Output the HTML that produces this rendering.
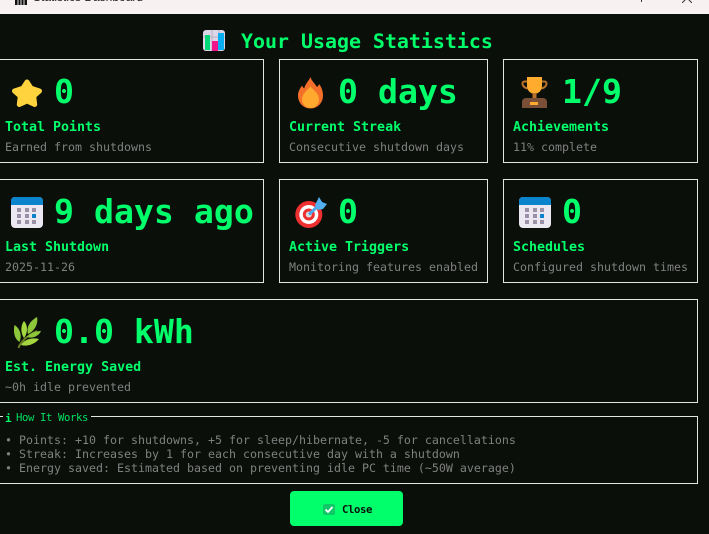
<!DOCTYPE html>
<html lang="en">
<head>
<meta charset="utf-8">
<title>Statistics Dashboard</title>
<style>
html,body{margin:0;padding:0;width:709px;height:534px;overflow:hidden;background:#0a0f0a}
body{position:relative;font-family:"DejaVu Sans Mono","Liberation Mono",monospace}
.t{position:absolute;white-space:pre;line-height:1em}
.card{position:absolute;box-sizing:border-box;border:1px solid #e4e4e4}
.v{color:#00ff6a;font-size:33.2px;font-weight:700}
.l{color:#00ff6a;font-size:13.3px;font-weight:700}
.s{color:#808080;font-size:11.63px}
svg{position:absolute;display:block}
#bar{position:absolute;left:0;top:0;width:709px;height:14px;background:#f8f1f1;overflow:hidden}
</style>
</head>
<body>
<div id="bar">
<svg style="left:15px;top:-6px" width="12" height="11" viewBox="0 0 12 11"><path d="M0 0h12v11H0z" fill="#111"/><path d="M3 2v9M6 2v9M9 2v9" stroke="#ddd" stroke-width="1"/></svg>
<div style="position:absolute;left:33px;top:-10px;font:12px/14px 'Liberation Sans',sans-serif;color:#222">Statistics Dashboard</div>
<div style="position:absolute;left:641px;top:0;width:1px;height:2px;background:#333"></div>
<svg style="left:682px;top:-7px" width="10" height="10" viewBox="0 0 10 10"><path d="M0 0l10 10M10 0L0 10" stroke="#333" stroke-width="1" fill="none"/></svg>
</div>

<svg style="left:203px;top:30px" width="22" height="21" viewBox="0 0 22 21"><rect width="22" height="21" rx="3" fill="#dcd6e6"/><path d="M0 7h22M9 0v21M16 0v21" stroke="#b6b0c0" stroke-width="1"/><rect x="2" y="5" width="5" height="15" fill="#00d878"/><rect x="9" y="11" width="6" height="10" fill="#f0148c"/><rect x="15" y="3" width="6" height="17" fill="#08aef2"/></svg>
<div class="t" style="left:241px;top:32px;color:#00ff6a;font-size:19.93px;font-weight:700">Your Usage Statistics</div>

<div class="card" style="left:-12px;top:59px;width:276px;height:104px"></div>
<svg style="left:11px;top:78px" width="32" height="30" viewBox="0 0 32 30"><path d="M16 4L20.100 10.300 28.500 13 22.700 18.200 23.700 26.500 16 23 8.300 26.500 9.300 18.200 3.500 13 11.900 10.300z" fill="#ffd33d" stroke="#ffd33d" stroke-width="5" stroke-linejoin="round"/></svg>
<div class="t v" style="left:54px;top:75px">0</div>
<div class="t l" style="left:5px;top:121px">Total Points</div>
<div class="t s" style="left:5px;top:142px">Earned from shutdowns</div>

<div class="card" style="left:279px;top:59px;width:209px;height:104px"></div>
<svg style="left:298px;top:77px" width="25" height="32" viewBox="0 0 25 32"><path d="M12.500 0c.8 3.500 4 6 6.500 10 1-.8 1.800-1.800 2-3 2.500 3 4 7 4 11.500C25 26 19.500 31.500 12.500 31.500S0 26 0 18.500C0 14 2.500 11 4 8.500c.6 1.400 1.200 2.300 2.300 3C7 7 10.500 4.500 12.500 0z" fill="#f4702a"/><path d="M12.500 9.500c3 3.500 8.500 7 8.500 13 0 5-3.800 8.500-8.500 8.500S4 27.500 4 22.500c0-6 5.500-9.500 8.500-13z" fill="#ffa92e"/></svg>
<div class="t v" style="left:338px;top:75px">0 days</div>
<div class="t l" style="left:289px;top:121px">Current Streak</div>
<div class="t s" style="left:289px;top:142px">Consecutive shutdown days</div>

<div class="card" style="left:503px;top:59px;width:195px;height:104px"></div>
<svg style="left:521px;top:77px" width="28" height="31" viewBox="0 0 28 31"><path d="M6 4.500H3.500a2 2 0 0 0-2 2.500C2 9.500 4 11 7 11.500M21 4.500h2.500a2 2 0 0 1 2 2.500C25 9.500 23 11 20 11.500" fill="none" stroke="#b8722c" stroke-width="2"/><path d="M6 0h15v9c0 4-3 7-5.500 7.500v1.500h-4v-1.500C9 16 6 13 6 9z" fill="#ffac2e"/><path d="M11.500 16h4v5h-4z" fill="#b8722c"/><path d="M1 31v-6c0-2.500 2-4 4-4h17c2 0 4 1.500 4 4v6z" fill="#7a4f38"/><rect x="9" y="25" width="8" height="3" fill="#ffac2e"/></svg>
<div class="t v" style="left:562px;top:75px">1/9</div>
<div class="t l" style="left:513px;top:121px">Achievements</div>
<div class="t s" style="left:513px;top:142px">11% complete</div>

<div class="card" style="left:-12px;top:179px;width:276px;height:104px"></div>
<svg style="left:11px;top:197px" width="32" height="31" viewBox="0 0 32 31"><rect width="32" height="31" rx="4" fill="#ebe8f2"/><path d="M0 8V4a4 4 0 0 1 4-4h24a4 4 0 0 1 4 4v4z" fill="#0a84cc"/><path d="M6 11h4v4H6zM14 11h4v4h-4zM21 11h4v4h-4zM6 17h4v4H6zM14 17h4v4h-4zM6 23h4v4H6zM14 23h4v4h-4zM21 23h4v4h-4z" fill="#9a91a8"/><path d="M21 17h4v4h-4z" fill="#0a84cc"/></svg>
<div class="t v" style="left:54px;top:195px">9 days ago</div>
<div class="t l" style="left:5px;top:241px">Last Shutdown</div>
<div class="t s" style="left:5px;top:262px">2025-11-26</div>

<div class="card" style="left:279px;top:179px;width:209px;height:104px"></div>
<svg style="left:295px;top:197px" width="32" height="31" viewBox="0 0 32 31"><circle cx="13.800" cy="17.500" r="13.500" fill="#ee3030"/><circle cx="13.800" cy="17.500" r="9.500" fill="#fff"/><circle cx="13.800" cy="17.500" r="6" fill="#ee3030"/><circle cx="13.800" cy="17.500" r="3" fill="#ddd"/><path d="M14 17.500L25 7" stroke="#4aa8ee" stroke-width="3"/><path d="M20 8L24 0l3 5 5 2-4 5-5 1z" fill="#52b0f2"/></svg>
<div class="t v" style="left:338px;top:195px">0</div>
<div class="t l" style="left:289px;top:241px">Active Triggers</div>
<div class="t s" style="left:289px;top:262px">Monitoring features enabled</div>

<div class="card" style="left:503px;top:179px;width:195px;height:104px"></div>
<svg style="left:519px;top:197px" width="32" height="31" viewBox="0 0 32 31"><rect width="32" height="31" rx="4" fill="#ebe8f2"/><path d="M0 8V4a4 4 0 0 1 4-4h24a4 4 0 0 1 4 4v4z" fill="#0a84cc"/><path d="M6 11h4v4H6zM14 11h4v4h-4zM21 11h4v4h-4zM6 17h4v4H6zM14 17h4v4h-4zM6 23h4v4H6zM14 23h4v4h-4zM21 23h4v4h-4z" fill="#9a91a8"/><path d="M21 17h4v4h-4z" fill="#0a84cc"/></svg>
<div class="t v" style="left:562px;top:195px">0</div>
<div class="t l" style="left:513px;top:241px">Schedules</div>
<div class="t s" style="left:513px;top:262px">Configured shutdown times</div>

<div class="card" style="left:-12px;top:299px;width:710px;height:104px"></div>
<svg style="left:14px;top:317px" width="27" height="32" viewBox="0 0 27 32"><path d="M4.500 31C6 26 12 19 23 14" fill="none" stroke="#6b7f24" stroke-width="2"/><path d="M5.500 25C.5 22-1 15 .5 8c5 3 8 10 5 17z" fill="#8ec63a"/><path d="M10 21C6 15 7 8 10 4c4 4 4 12 0 17z" fill="#a4d63f"/><path d="M14 17c-2-7 2-13 9-17 1.500 6-2 14-9 17z" fill="#8ec63a"/><path d="M7 28c3-5 10-8 18-6-4 5-12 8-18 6z" fill="#a4d63f"/><path d="M13 20c3-4 9-6 14-6-2 5-9 8-14 6z" fill="#8ec63a"/></svg>
<div class="t v" style="left:54px;top:315px">0.0 kWh</div>
<div class="t l" style="left:5px;top:361px">Est. Energy Saved</div>
<div class="t s" style="left:5px;top:382px">~0h idle prevented</div>

<div class="card" style="left:-12px;top:416px;width:710px;height:68px"></div>
<div style="position:absolute;left:3px;top:410px;width:88px;height:14px;background:#0a0f0a"></div>
<div class="t" style="left:5px;top:413px;color:#00ff6a;font-size:11px;font-weight:700">i</div>
<div class="t" style="left:16px;top:413px;color:#00e060;font-size:10.6px;letter-spacing:-.38px">How It Works</div>
<div class="t s" style="left:5px;top:435px">• Points: +10 for shutdowns, +5 for sleep/hibernate, -5 for cancellations</div>
<div class="t s" style="left:5px;top:449px">• Streak: Increases by 1 for each consecutive day with a shutdown</div>
<div class="t s" style="left:5px;top:463px">• Energy saved: Estimated based on preventing idle PC time (~50W average)</div>

<div style="position:absolute;left:290px;top:491px;width:113px;height:35px;background:#00ff6a;border-radius:4px"></div>
<svg style="left:323px;top:504px" width="12" height="11" viewBox="0 0 12 11"><rect width="12" height="11" rx="2" fill="#10c868"/><path d="M2.500 5.500l2.500 2.500 4.500-5" fill="none" stroke="#fff" stroke-width="1.800"/></svg>
<div class="t" style="left:342px;top:505px;color:#0a0f0a;font-size:10.6px;letter-spacing:-.38px;font-weight:700">Close</div>
</body>
</html>
